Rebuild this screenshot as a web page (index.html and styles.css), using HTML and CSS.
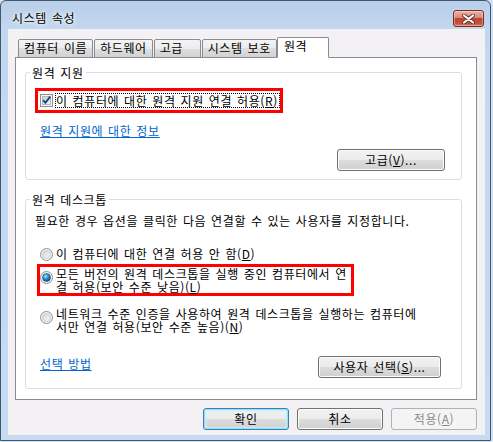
FILE: index.html
```html
<!DOCTYPE html>
<html lang="ko">
<head>
    <meta charset="utf-8">
    <title>시스템 속성</title>
    <link rel="stylesheet" href="styles.css">
</head>
<body>
<div class="window">
    <div class="titlebar">
        <span class="title">시스템 속성</span>
        <span class="close">
            <svg width="13" height="10" viewBox="0 0 13 10">
                <path d="M2 1.5 L11 8.5 M11 1.5 L2 8.5" stroke="#5b302a" stroke-width="3.8" stroke-linecap="round"/>
                <path d="M2 1.5 L11 8.5 M11 1.5 L2 8.5" stroke="#fff" stroke-width="2.2" stroke-linecap="round"/>
            </svg>
        </span>
    </div>

    <div class="client">
        <div class="tabs">
            <span class="tab">컴퓨터 이름</span>
            <span class="tab">하드웨어</span>
            <span class="tab">고급</span>
            <span class="tab">시스템 보호</span>
            <span class="tab tab-active">원격</span>
        </div>

        <div class="panel">
            <fieldset class="group">
                <legend>원격 지원</legend>
                <div class="mark mark-check">
                    <svg class="box" width="13" height="13" viewBox="0 0 13 13">
                        <defs>
                            <linearGradient id="cbFill" x1="0" y1="0" x2="1" y2="1">
                                <stop offset="0" stop-color="#c9ced6"/>
                                <stop offset="1" stop-color="#f7f7f7"/>
                            </linearGradient>
                        </defs>
                        <rect x="0.5" y="0.5" width="12" height="12" fill="#f5f5f5" stroke="#8e8f8f"/>
                        <rect x="2.5" y="2.5" width="8" height="8" fill="url(#cbFill)" stroke="#b3b8be"/>
                        <path d="M3.2 6.2 L5.4 8.8 L10.2 2.6" fill="none" stroke="#1f3f8f" stroke-width="1.9"/>
                    </svg>
                    <span class="focus">이 컴퓨터에 대한 원격 지원 연결 허용(<u>R</u>)</span>
                </div>
                <a class="link" href="#">원격 지원에 대한 정보</a>
                <div class="actions">
                    <button class="btn btn-advanced">고급(<u>V</u>)...</button>
                </div>
            </fieldset>

            <fieldset class="group group-desktop">
                <legend>원격 데스크톱</legend>
                <p class="desc">필요한 경우 옵션을 클릭한 다음 연결할 수 있는 사용자를 지정합니다.</p>

                <div class="option option-first">
                    <svg class="box" width="13" height="13" viewBox="0 0 13 13">
                        <defs>
                            <linearGradient id="rbFill1" x1="0" y1="0" x2="1" y2="1">
                                <stop offset="0" stop-color="#cfd3d9"/>
                                <stop offset="1" stop-color="#fafafa"/>
                            </linearGradient>
                        </defs>
                        <circle cx="6.5" cy="6.5" r="6" fill="#f5f5f5" stroke="#8e8f8f"/>
                        <circle cx="6.5" cy="6.5" r="4" fill="url(#rbFill1)" stroke="#bfc3c8" stroke-width="0.8"/>
                    </svg>
                    <span>이 컴퓨터에 대한 연결 허용 안 함(<u>D</u>)</span>
                </div>

                <div class="mark mark-radio">
                    <svg class="box" width="13" height="13" viewBox="0 0 13 13">
                        <defs>
                            <radialGradient id="rbDot" cx="0.4" cy="0.35" r="0.7">
                                <stop offset="0" stop-color="#c4ecff"/>
                                <stop offset="0.35" stop-color="#3aa3e0"/>
                                <stop offset="1" stop-color="#0b3f75"/>
                            </radialGradient>
                        </defs>
                        <circle cx="6.5" cy="6.5" r="6" fill="#f5f5f5" stroke="#8e8f8f"/>
                        <circle cx="6.5" cy="6.5" r="4" fill="url(#rbDot)" stroke="#1d4f80" stroke-width="0.6"/>
                    </svg>
                    <div class="lines">
                        <div class="line">모든 버전의 원격 데스크톱을 실행 중인 컴퓨터에서 연</div>
                        <div class="line">결 허용(보안 수준 낮음)(<u>L</u>)</div>
                    </div>
                </div>

                <div class="option option-multi">
                    <svg class="box" width="13" height="13" viewBox="0 0 13 13">
                        <defs>
                            <linearGradient id="rbFill3" x1="0" y1="0" x2="1" y2="1">
                                <stop offset="0" stop-color="#cfd3d9"/>
                                <stop offset="1" stop-color="#fafafa"/>
                            </linearGradient>
                        </defs>
                        <circle cx="6.5" cy="6.5" r="6" fill="#f5f5f5" stroke="#8e8f8f"/>
                        <circle cx="6.5" cy="6.5" r="4" fill="url(#rbFill3)" stroke="#bfc3c8" stroke-width="0.8"/>
                    </svg>
                    <div class="lines">
                        <div class="line">네트워크 수준 인증을 사용하여 원격 데스크톱을 실행하는 컴퓨터에</div>
                        <div class="line">서만 연결 허용(보안 수준 높음)(<u>N</u>)</div>
                    </div>
                </div>

                <div class="row">
                    <a class="link link-inline" href="#">선택 방법</a>
                    <button class="btn btn-users">사용자 선택(<u>S</u>)...</button>
                </div>
            </fieldset>
        </div>

        <div class="footer">
            <button class="btn btn-default">확인</button>
            <button class="btn">취소</button>
            <button class="btn" disabled>적용(<u>A</u>)</button>
        </div>
    </div>
</div>
</body>
</html>
```

FILE: styles.css
```css
*{
    box-sizing: border-box;
}
html, body{
    margin: 0;
}
body{
    background: #d3e2f3;
    font-family: "Noto Sans CJK KR", "Noto Sans", sans-serif;
    font-size: 12px;
    color: #000;
    letter-spacing: .6px;
    word-spacing: 1px;
}

.window{
    width: 491px;
    height: 441px;
    border: 1px solid #42566e;
    border-radius: 6px 6px 0 0;
    background: linear-gradient(#b9cee8, #c3d7ef 28px, #c6daf1);
    display: flex;
    flex-direction: column;
}
.titlebar{
    height: 28px;
    display: flex;
    align-items: flex-start;
    justify-content: space-between;
    padding: 10px 6px 0 11px;
}
.title{
    line-height: 14px;
    text-shadow: 0 0 6px #fff, 0 0 3px #fff;
}
.close{
    width: 31px;
    height: 17px;
    margin-top: -1px;
    border: 1px solid #7b2c22;
    border-radius: 3px;
    background: linear-gradient(#eab3a9, #d9897b 45%, #c24431 50%, #c5533a 85%, #d8825f);
    box-shadow: inset 0 0 0 1px rgba(255,255,255,.35);
    display: flex;
    align-items: center;
    justify-content: center;
}

.client{
    flex: 1;
    margin: 0 5px 5px 7px;
    padding: 8px 8px 5px 7px;
    background: #f4f1f5;
    display: flex;
    flex-direction: column;
}

.tabs{
    display: flex;
    align-items: flex-end;
    gap: 1px;
    height: 21px;
    padding-left: 3px;
    margin-bottom: -1px;
    position: relative;
    z-index: 1;
}
.tab{
    height: 19px;
    min-width: 47px;
    padding: 0 5px 2px;
    line-height: 15px;
    white-space: nowrap;
    border: 1px solid #898c95;
    border-radius: 2px 2px 0 0;
    background: linear-gradient(#f4f4f4, #ececec 50%, #dedede 50%, #d2d2d2);
}
.tab-active{
    height: 21px;
    min-width: 52px;
    margin-left: -1px;
    padding: 0 6px 4px;
    background: #fff;
    border-bottom-color: #fff;
}

.panel{
    background: #fff;
    border: 1px solid #898c95;
    padding: 8px 14px 10px 9px;
}

.group{
    margin: 0;
    min-width: 0;
    border: 1px solid #d5dfe5;
    border-radius: 3px;
    padding: 9px 16px 8px 9px;
}
.group legend{
    margin-left: -5px;
    padding: 0 2px;
    line-height: 13px;
}
.group-desktop{
    margin-top: 13px;
    padding: 8px 18px 10px 9px;
}

.mark{
    border: 3px solid #ff0000;
    display: flex;
    white-space: nowrap;
}
.mark-check{
    width: 248px;
    height: 25px;
    align-items: center;
    gap: 2px;
    padding-left: 2px;
}
.focus{
    border: 1px dotted #000;
    padding: 0 1px 0 0;
    line-height: 13px;
}
.mark-radio{
    width: 317px;
    height: 32px;
    margin: 3px 0 0 2px;
    align-items: flex-start;
    gap: 3px;
}
.mark-radio .box{
    margin-top: 4px;
}

.box{
    flex: none;
}

.line{
    height: 13px;
    line-height: 13px;
}

.link{
    display: block;
    width: max-content;
    margin: 11px 0 0 5px;
    line-height: 14px;
    color: #0066cc;
}
.link-inline{
    margin-top: 1px;
}

.actions{
    display: flex;
    justify-content: flex-end;
    margin-top: 11px;
}

.desc{
    margin: 0;
    line-height: 14px;
    white-space: nowrap;
}

.option{
    display: flex;
    gap: 3px;
    margin-left: 5px;
    white-space: nowrap;
}
.option-first{
    margin-top: 19px;
    align-items: center;
    line-height: 14px;
}
.option-multi{
    margin-top: 11px;
    align-items: flex-start;
}
.option-multi .box{
    margin-top: 4px;
}

.row{
    display: flex;
    justify-content: space-between;
    align-items: flex-start;
    margin-top: 23px;
}

.btn{
    height: 22px;
    padding: 0;
    font: inherit;
    letter-spacing: inherit;
    word-spacing: inherit;
    line-height: 18px;
    color: #000;
    border: 1px solid #707070;
    border-radius: 3px;
    background: linear-gradient(#f2f2f2, #ebebeb 50%, #dddddd 50%, #cfcfcf);
    box-shadow: inset 0 0 0 1px #fcfcfc;
}
.btn-advanced{
    width: 108px;
}
.btn-users{
    width: 123px;
    margin-right: 2px;
}
.btn-default{
    border-color: #3c7fb1;
    box-shadow: inset 0 0 0 1px #93def9, inset 0 0 2px 2px #c8eefc;
}
.btn:disabled{
    color: #8a8a8a;
    border-color: #adb2b5;
    background: #f4f4f4;
    box-shadow: none;
}

.footer{
    display: flex;
    justify-content: flex-end;
    gap: 8px;
    margin-top: 8px;
}
.footer .btn{
    width: 86px;
}
```
